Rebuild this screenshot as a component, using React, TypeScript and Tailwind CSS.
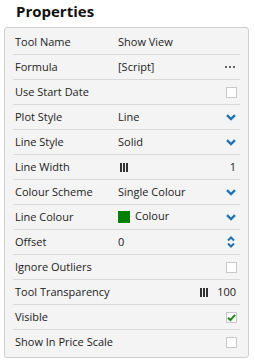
import { ReactNode } from 'react';

const Chevron = () => (
  <svg width="10" height="7" viewBox="0 0 10 7" className="mr-[1px]">
    <path d="M1 1.2 L5 5 L9 1.2" fill="none" stroke="#1f74b8" strokeWidth="2.4" />
  </svg>
);

const Spinner = () => (
  <svg width="8" height="12" viewBox="0 0 8 12" className="mr-[2px]">
    <path d="M1 4.5 L4 1.5 L7 4.5" fill="none" stroke="#1f74b8" strokeWidth="2" />
    <path d="M1 7.5 L4 10.5 L7 7.5" fill="none" stroke="#1f74b8" strokeWidth="2" />
  </svg>
);

const Bars = () => (
  <div className="flex gap-[1px] h-[9px]">
    <span className="w-[2px] bg-[#333]" />
    <span className="w-[2px] bg-[#333]" />
    <span className="w-[2px] bg-[#333]" />
  </div>
);

const Dots = () => (
  <div className="flex gap-[2px] mr-[2px]">
    <span className="w-[2px] h-[2px] bg-[#666]" />
    <span className="w-[2px] h-[2px] bg-[#666]" />
    <span className="w-[2px] h-[2px] bg-[#666]" />
  </div>
);

const Box = ({ checked }: { checked?: boolean }) => (
  <div className="w-[11px] h-[11px] bg-white border border-[#c8c8c8] flex items-center justify-center">
    {checked && (
      <svg width="10" height="9" viewBox="0 0 10 9">
        <path d="M1 4.8 L3.8 7.3 L9 1.5" fill="none" stroke="#1b8a1b" strokeWidth="2.2" />
      </svg>
    )}
  </div>
);

const Row = ({
  label,
  value,
  right,
  last,
}: {
  label: string;
  value?: ReactNode;
  right?: ReactNode;
  last?: boolean;
}) => (
  <div
    className={`h-[25px] flex items-center pl-[2px] pr-[3px] ${last ? '' : 'border-b border-[#d9d9d9]'}`}
  >
    <div className="w-[103px] shrink-0">{label}</div>
    <div className="flex-1 flex items-center">{value}</div>
    <div className="flex items-center">{right}</div>
  </div>
);

export default function App() {
  return (
    <div className="w-[255px] h-[360px] bg-white font-['Open_Sans',sans-serif] text-[#222] text-[11px]">
      <div className="pl-[16px] pt-[2px] h-[27px] text-[15px] font-bold text-[#111] leading-[19px]">
        Properties
      </div>
      <div className="mx-[4px] w-[245px] bg-[#f4f4f4] border border-[#cfcfcf] rounded-[3px] px-[8px] py-[2px]">
        <Row label="Tool Name" value="Show View" />
        <Row label="Formula" value="[Script]" right={<Dots />} />
        <Row label="Use Start Date" right={<Box />} />
        <Row label="Plot Style" value="Line" right={<Chevron />} />
        <Row label="Line Style" value="Solid" right={<Chevron />} />
        <Row label="Line Width" value={<div className="ml-[2px]"><Bars /></div>} right={<span className="mr-[1px]">1</span>} />
        <Row label="Colour Scheme" value="Single Colour" right={<Chevron />} />
        <Row
          label="Line Colour"
          value={
            <div className="flex items-center gap-[4px] -ml-[1px]">
              <span className="w-[14px] h-[14px] bg-[#008000] border border-white" />
              <span className="-mt-[2px]">Colour</span>
            </div>
          }
          right={<Chevron />}
        />
        <Row label="Offset" value="0" right={<Spinner />} />
        <Row label="Ignore Outliers" right={<Box />} />
        <Row
          label="Tool Transparency"
          right={
            <div className="flex items-center gap-[9px] mr-[1px]">
              <Bars />
              <span>100</span>
            </div>
          }
        />
        <Row label="Visible" right={<Box checked />} />
        <Row label="Show In Price Scale" right={<Box />} last />
      </div>
    </div>
  );
}
